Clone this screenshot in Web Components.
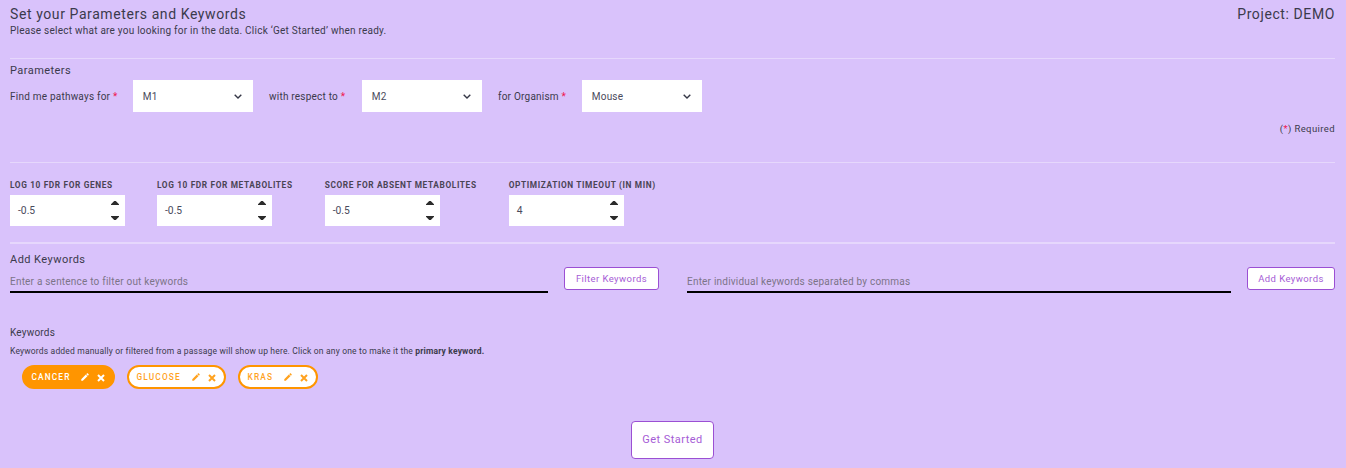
<!DOCTYPE html>
<html>
<head>
<meta charset="utf-8">
<title>Set your Parameters and Keywords</title>
<style>
    html, body {
        margin: 0;
        height: 468px;
        overflow: hidden;
        background: #d9c2fb;
    }
    body {
        font-family: Roboto, "Liberation Sans", sans-serif;
        color: #3b3a4c;
    }
</style>
</head>
<body>
<setup-page></setup-page>
<script>
const req = `<span style="color:#f0154f">*</span>`;

class XDivider extends HTMLElement {
    constructor() {
        super();
        this.attachShadow({mode: 'open'}).innerHTML = `
        <style>
            :host { display: block; height: 1px; background: #e6d7fc; }
            :host([thick]) { height: 2px; }
        </style>`;
    }
}

class XSelect extends HTMLElement {
    constructor() {
        super();
        this.attachShadow({mode: 'open'}).innerHTML = `
        <style>
            :host {
                display: flex;
                align-items: center;
                justify-content: space-between;
                box-sizing: border-box;
                width: 120px;
                height: 32px;
                padding: 0 11px 0 9.8px;
                background: #fff;
                font-size: 10px;
                letter-spacing: 0.2px;
                color: #4a4a5c;
            }
            svg { width: 8px; height: 5px; margin-top: 1px; }
        </style>
        <slot></slot>
        <svg viewBox="0 0 8 5"><path d="M.7.7L4 4 7.3.7" fill="none" stroke="#353746" stroke-width="1.4"/></svg>`;
    }
}

class XNumber extends HTMLElement {
    constructor() {
        super();
        this.attachShadow({mode: 'open'}).innerHTML = `
        <style>
            :host { display: block; }
            .label {
                font-size: 8.3px;
                font-weight: 700;
                letter-spacing: 0.63px;
                line-height: 10px;
                white-space: nowrap;
                text-transform: uppercase;
                color: #4a4455;
                margin-bottom: 5px;
            }
            .box {
                display: flex;
                align-items: center;
                justify-content: space-between;
                box-sizing: border-box;
                width: 115px;
                height: 31px;
                padding: 0 6px 0 8px;
                background: #fff;
                font-size: 10.3px;
                color: #4a4a5c;
            }
            svg { width: 8px; height: 19px; display: block; }
        </style>
        <div class="label"><slot name="label"></slot></div>
        <div class="box">
            <span><slot></slot></span>
            <svg viewBox="0 0 8 19"><path d="M3.2 0h1.6L8 3.2V4H0v-.8z M0 15h8v.8L4.8 19H3.2L0 15.8z" fill="#2b2b2b"/></svg>
        </div>`;
    }
}

class XField extends HTMLElement {
    constructor() {
        super();
        this.attachShadow({mode: 'open'}).innerHTML = `
        <style>
            :host {
                display: flex;
                flex: 1;
                align-items: flex-end;
                box-sizing: border-box;
                height: 27px;
                padding-bottom: 4px;
                border-bottom: 2px solid #000;
                font-size: 10px;
                letter-spacing: 0.21px;
                color: #7c7488;
            }
            :host([fixed]) { flex: none; width: 538px; }
        </style>
        <slot></slot>`;
    }
}

class XButton extends HTMLElement {
    constructor() {
        super();
        this.attachShadow({mode: 'open'}).innerHTML = `
        <style>
            :host {
                display: inline-flex;
                align-items: center;
                justify-content: center;
                box-sizing: border-box;
                height: 23px;
                padding: 0 0 1px;
                background: #fff;
                border: 1px solid #9b4fd3;
                border-radius: 3px;
                font-size: 9.5px;
                letter-spacing: 0.42px;
                color: #a65cd6;
                white-space: nowrap;
            }
            :host([large]) {
                height: 38px;
                width: 83px;
                border-radius: 4px;
                font-size: 11px;
                letter-spacing: 0.45px;
            }
        </style>
        <slot></slot>`;
    }
}

class XChip extends HTMLElement {
    constructor() {
        super();
        this.attachShadow({mode: 'open'}).innerHTML = `
        <style>
            :host {
                display: inline-flex;
                align-items: center;
                box-sizing: border-box;
                height: 24px;
                border: 2px solid #ff9500;
                border-radius: 12px;
                background: #fff;
                color: #ffa21f;
                font-size: 8.3px;
                font-weight: 500;
                letter-spacing: 1.15px;
                padding: 0 6px 0 7.5px;
            }
            :host([active]) { background: #ff9500; color: #fff; }
            .text { flex: 1; margin-top: -1px; }
            svg { display: block; fill: currentColor; }
            .edit { width: 10px; height: 10px; margin: -1px 7px 0 0; }
            .del { width: 8px; height: 8px; margin-top: 1px; margin-right: 2px; }
        </style>
        <span class="text"><slot></slot></span>
        <svg class="edit" viewBox="0 0 24 24"><path d="M3 17.25V21h3.75L17.81 9.94l-3.75-3.75L3 17.25zM20.71 7.04a1 1 0 0 0 0-1.41l-2.34-2.34a1 1 0 0 0-1.41 0l-1.83 1.83 3.75 3.75 1.83-1.83z"/></svg>
        <svg class="del" viewBox="0 0 8 8"><path d="M1 1l6 6M7 1L1 7" stroke="currentColor" stroke-width="2" fill="none"/></svg>`;
    }
}

const pageTemplate = document.createElement('template');
pageTemplate.innerHTML = `
    <style>
        :host {
            display: block;
            box-sizing: border-box;
            height: 468px;
            padding: 6px 11px 0 10px;
            font-size: 10px;
        }
        .head { display: flex; justify-content: space-between; }
        h1 { margin: 0; font-size: 14px; font-weight: 400; letter-spacing: 0.59px; line-height: 17px; }
        .project { font-size: 14px; letter-spacing: 0.6px; line-height: 17px; }
        .sub { font-size: 10px; letter-spacing: 0.24px; line-height: 13px; margin-top: 1px; }
        .first { margin-top: 21px; }
        .h2 { font-size: 11px; letter-spacing: 0.45px; line-height: 13px; }
        .params { display: flex; align-items: center; gap: 16px; margin-top: 3px; }
        .pair { display: flex; align-items: center; }
        .pair span { font-size: 10px; letter-spacing: 0.22px; white-space: nowrap; }
        .required { text-align: right; font-size: 9.5px; letter-spacing: 0.4px; line-height: 12px; margin-top: 11px; margin-bottom: 27px; }
        .numbers { display: flex; gap: 32px; margin-top: 17px; margin-bottom: 16px; }
        .kw-title { margin-top: 9px; }
        .kw-row { display: flex; align-items: flex-end; }
        .kw-row x-button { margin-left: 16px; margin-bottom: 3px; }
        .kw-row .second { margin-left: 28px; }
        .filter { width: 95px; }
        .add { width: 88px; }
        .kw-label { font-size: 10px; letter-spacing: 0.2px; line-height: 12px; margin-top: 34px; }
        .kw-help { font-size: 8.5px; letter-spacing: 0.175px; line-height: 10px; margin-top: 7px; }
        .chips { display: flex; gap: 12px; padding-left: 12px; margin-top: 9px; }
        .go { display: flex; justify-content: center; margin-top: 32px; }
    </style>
    <div class="head">
        <h1>Set your Parameters and Keywords</h1>
        <div class="project">Project: DEMO</div>
    </div>
    <div class="sub">Please select what are you looking for in the data. Click ‘Get Started’ when ready.</div>

    <x-divider class="first"></x-divider>
    <div class="h2" style="margin-top:5px">Parameters</div>
    <div class="params">
        <div class="pair"><span style="width:123px">Find me pathways for ${req}</span><x-select>M1</x-select></div>
        <div class="pair"><span style="width:93px">with respect to ${req}</span><x-select>M2</x-select></div>
        <div class="pair"><span style="width:84px">for Organism ${req}</span><x-select>Mouse</x-select></div>
    </div>
    <div class="required">(${req}) Required</div>

    <x-divider></x-divider>
    <div class="numbers">
        <x-number><span slot="label">Log 10 FDR for Genes</span>-0.5</x-number>
        <x-number><span slot="label">Log 10 FDR for Metabolites</span>-0.5</x-number>
        <x-number><span slot="label">Score for Absent Metabolites</span>-0.5</x-number>
        <x-number><span slot="label">Optimization Timeout (in min)</span>4</x-number>
    </div>
    <x-divider thick></x-divider>

    <div class="h2 kw-title">Add Keywords</div>
    <div class="kw-row">
        <x-field fixed>Enter a sentence to filter out keywords</x-field>
        <x-button class="filter">Filter Keywords</x-button>
        <x-field class="second">Enter individual keywords separated by commas</x-field>
        <x-button class="add">Add Keywords</x-button>
    </div>

    <div class="kw-label">Keywords</div>
    <div class="kw-help">Keywords added manually or filtered from a passage will show up here. Click on any one to make it the <b>primary keyword.</b></div>
    <div class="chips">
        <x-chip active style="width:93px">CANCER</x-chip>
        <x-chip style="width:99px">GLUCOSE</x-chip>
        <x-chip style="width:80px">KRAS</x-chip>
    </div>
    <div class="go"><x-button large>Get Started</x-button></div>
`;

class SetupPage extends HTMLElement {
    constructor() {
        super();
        this.attachShadow({mode: 'open'}).appendChild(pageTemplate.content.cloneNode(true));
    }
}

customElements.define('x-divider', XDivider);
customElements.define('x-select', XSelect);
customElements.define('x-number', XNumber);
customElements.define('x-field', XField);
customElements.define('x-button', XButton);
customElements.define('x-chip', XChip);
customElements.define('setup-page', SetupPage);
</script>
</body>
</html>
